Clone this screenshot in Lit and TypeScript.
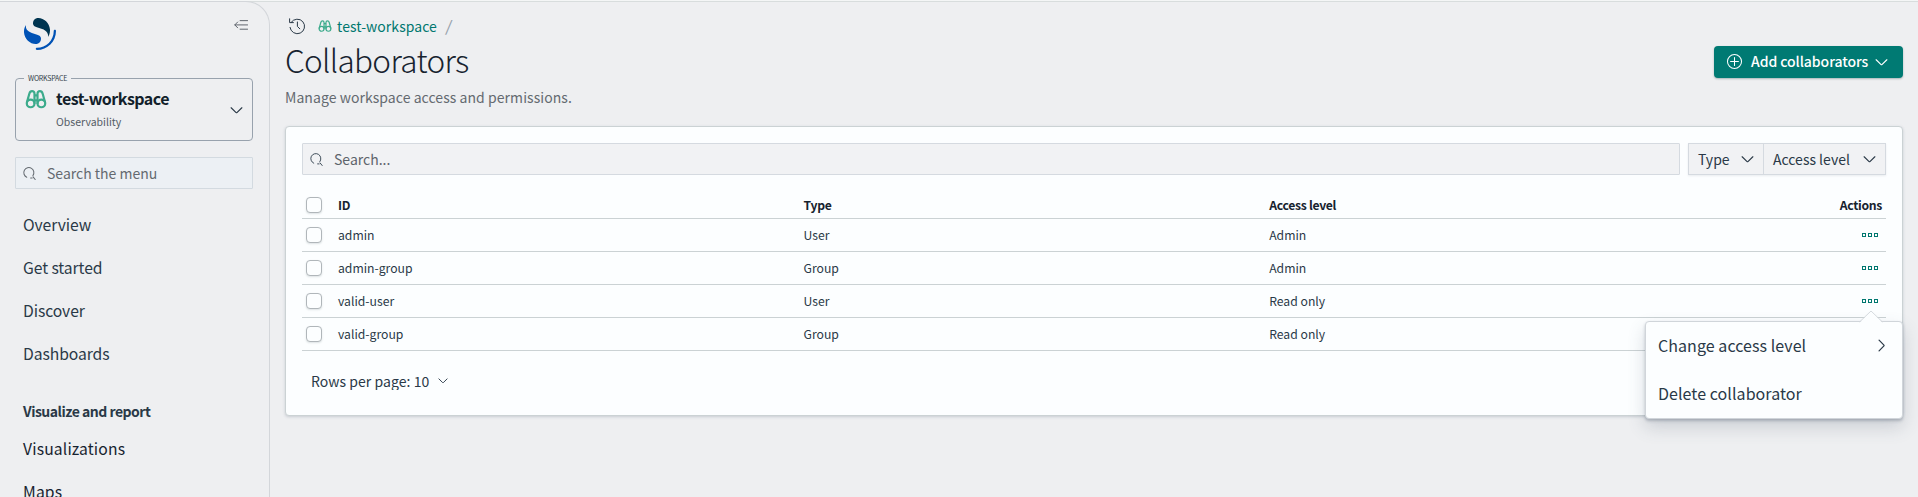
import { LitElement, html, css, svg } from "lit";
import { customElement, property } from "lit/decorators.js";

const glyphs: Record<string, unknown> = {
  search: svg`<path d="M4.6 12.6A6.2 6.2 0 1 1 12.2 10.6M9.4 13.4h1.8M12.4 12.2L15 15.4" />`,
  chevron: svg`<path d="M1.4 4.6L7.5 10.6a.7.7 0 0 0 1 0L14.6 4.6" />`,
  chevronRight: svg`<path d="M5 1.4L11 7.5a.7.7 0 0 1 0 1L5 14.6" />`,
  plus: svg`<circle cx="8" cy="8" r="7.5" /><path d="M8 3.8v8.4M3.8 8h8.4" />`,
  collapse: svg`<path d="M7 3h8.5M1 7.9h14.5M7 12.8h8.5M4.2 4.6L.9 7.9l3.3 3.3" />`,
  history: svg`<path d="M2.2 4.3A7.3 7.3 0 1 1 1 9.4M.6.8v3.8h3.8M8.4 4v4.4l2.4 2.4" />`,
  glasses: svg`<circle cx="4.1" cy="11.2" r="2.8" /><circle cx="11.9" cy="11.2" r="2.8" /><path d="M1.4 10.4L3.2 4Q3.7 2.2 5.1 2.2Q6.8 2.2 6.9 4V11M14.6 10.4L12.8 4Q12.3 2.2 10.9 2.2Q9.2 2.2 9.1 4V11M6.9 5.4h2.2M6.9 9h2.2" />`,
  dots: svg`<path class="sharp" d="M.5 6.5h3v3h-3zM6.5 6.5h3v3h-3zM12.5 6.5h3v3h-3z" />`,
};

@customElement("ui-icon")
class UiIcon extends LitElement {
  @property() name = "search";
  static styles = css`
    :host { display: block; flex: none; width: 16px; height: 16px; }
    svg { display: block; width: 100%; height: 100%; overflow: visible; fill: none; stroke: currentColor; stroke-width: var(--stroke, 1.25); stroke-linecap: round; stroke-linejoin: round; }
    .sharp { stroke-linejoin: miter; shape-rendering: crispEdges; }
  `;
  render() {
    return html`<svg viewBox="0 0 16 16">${glyphs[this.name]}</svg>`;
  }
}

@customElement("side-nav")
class SideNav extends LitElement {
  static styles = css`
    :host { display: block; box-sizing: border-box; width: 270px; flex: none; height: 496px; overflow: hidden; border: 1px solid #d3d6da; border-width: 1px 1px 0 0; border-top-right-radius: 24px; padding: 16px 16px 0 15px; }
    .top { display: flex; justify-content: space-between; align-items: flex-start; padding: 0 5px 0 9px; }
    .logo { display: block; width: 32px; height: 32px; }
    .toggle { width: 14px; height: 14px; color: #5a6068; --stroke: 1.1; }
    .space { box-sizing: border-box; height: 69px; margin: 22px 0 0; padding: 0 9px 0 8px; min-width: 0; border: 1px solid #98a2ad; border-radius: 4px; }
    legend { padding: 0 4px; font-size: 7px; line-height: 12px; letter-spacing: -0.22px; color: #343f4a; }
    .row { display: flex; }
    .binoc { width: 22px; height: 22px; color: #3cab8c; --stroke: 1.6; margin: 4px 9px 0 1px; }
    .who { flex: 1; }
    .name { font-size: 16px; font-weight: 700; line-height: 24px; letter-spacing: -0.53px; color: #131f2b; margin-top: 2px; }
    .kind { font-size: 10.5px; line-height: 18px; color: #555d66; margin-top: 3px; }
    .chev { width: 13px; height: 13px; margin-top: 20px; color: #2a3947; --stroke: 1.4; }
    .find { box-sizing: border-box; display: flex; align-items: center; height: 32px; margin-top: 16px; padding: 0 7px; border: 1px solid #d3dae0; background: #ecf0f4; font-size: 14px; color: #646a70; border-radius: 1px; }
    .find ui-icon { width: 13px; height: 13px; margin-right: 11px; }
    ul { list-style: none; margin: 14px 0 0; padding: 0 0 0 8px; }
    li { height: 43px; line-height: 43px; font-size: 15.7px; letter-spacing: -0.08px; color: #2a3947; }
    .head { height: 29px; line-height: 27px; padding-top: 23px; font-size: 14px; font-weight: 700; letter-spacing: -0.5px; }
    .dark { color: #17232f; letter-spacing: 0.15px; }
  `;
  render() {
    return html`
      <div class="top">
        <svg class="logo" viewBox="0 0 64 64">
          <path fill="#0052b5" d="M61.7374 23.5C60.4878 23.5 59.4748 24.513 59.4748 25.7626C59.4748 44.3813 44.3813 59.4748 25.7626 59.4748C24.513 59.4748 23.5 60.4878 23.5 61.7374C23.5 62.987 24.513 64 25.7626 64C46.8805 64 64 46.8805 64 25.7626C64 24.513 62.987 23.5 61.7374 23.5Z" />
          <path fill="#003551" d="M48.0814 38C50.2572 34.4505 52.3615 29.7178 51.9475 23.0921C51.0899 9.36725 38.6589 -1.04463 26.9206 0.0837327C22.3253 0.525465 17.6068 4.2712 18.026 10.9805C18.2082 13.8961 19.6352 15.6169 21.9544 16.9399C24.1618 18.1992 26.9978 18.9969 30.2128 19.9011C34.0962 20.9934 38.6009 22.2203 42.063 24.7717C46.2125 27.8295 49.0491 31.3743 48.0814 38Z" />
          <path fill="#0052b5" d="M3.91861 14C1.74276 17.5495 -0.361506 22.2822 0.0524931 28.9079C0.910072 42.6327 13.3411 53.0446 25.0794 51.9163C29.6747 51.4745 34.3932 47.7288 33.974 41.0195C33.7918 38.1039 32.3647 36.3831 30.0456 35.0601C27.8382 33.8008 25.0022 33.0031 21.7872 32.0989C17.9038 31.0066 13.3991 29.7797 9.93694 27.2283C5.78746 24.1704 2.95092 20.6257 3.91861 14Z" />
        </svg>
        <ui-icon class="toggle" name="collapse"></ui-icon>
      </div>
      <fieldset class="space">
        <legend>WORKSPACE</legend>
        <div class="row">
          <ui-icon class="binoc" name="glasses"></ui-icon>
          <div class="who"><div class="name">test-workspace</div><div class="kind">Observability</div></div>
          <ui-icon class="chev" name="chevron"></ui-icon>
        </div>
      </fieldset>
      <div class="find"><ui-icon name="search"></ui-icon>Search the menu</div>
      <ul>
        ${["Overview", "Get started", "Discover", "Dashboards"].map((t) => html`<li>${t}</li>`)}
        <li class="head">Visualize and report</li>
        ${["Visualizations", "Maps"].map((t) => html`<li class="dark">${t}</li>`)}
      </ul>
    `;
  }
}

const people = [
  { id: "admin", type: "User", access: "Admin" },
  { id: "admin-group", type: "Group", access: "Admin" },
  { id: "valid-user", type: "User", access: "Read only" },
  { id: "valid-group", type: "Group", access: "Read only", last: true },
];

@customElement("collab-table")
class CollabTable extends LitElement {
  static styles = css`
    :host { display: block; }
    .tr { display: grid; grid-template-columns: 28px 465.6px 465.6px 465.6px 1fr; align-items: center; height: 32px; border-bottom: 1px solid #cbd2d4; font-size: 12.2px; line-height: 18px; color: #2a3947; }
    .th { height: 27px; font-weight: 700; letter-spacing: -0.3px; color: #17232f; }
    .cell { padding: 0 8px; }
    .check { width: 14px; height: 14px; margin-left: 4px; border: 1px solid #b0b6ba; border-radius: 4px; background: #fcfeff; box-shadow: 0 1px 2px rgba(60, 80, 90, 0.16); }
    .act { padding-right: 4px; text-align: right; }
    .more { width: 16px; height: 16px; color: #00776f; --stroke: 1; margin-left: auto; margin-right: 8px; }
    .anchor { position: relative; }
    .menu { position: absolute; z-index: 2; right: -17px; top: 28px; box-sizing: border-box; width: 258px; height: 98px; padding: 0 15px 0 12px; background: #fcfeff; border: 1px solid #d0d5da; border-radius: 4px; box-shadow: 0 2px 3px rgba(65, 78, 101, 0.3), 0 8px 18px rgba(65, 78, 101, 0.2); }
    .tip { position: absolute; right: 19px; top: -12px; width: 24px; height: 13px; }
    .item { display: flex; justify-content: space-between; align-items: center; box-sizing: border-box; height: 48px; padding-bottom: 3px; font-size: 16px; letter-spacing: 0.06px; color: #2a3947; }
    .item ui-icon { width: 13px; height: 13px; --stroke: 1.5; margin: 1px -1px 0 0; }
  `;
  render() {
    return html`
      <div class="tr th">
        <div class="check"></div><div class="cell">ID</div><div class="cell">Type</div><div class="cell">Access level</div><div class="act">Actions</div>
      </div>
      ${people.map(
        (p, i) => html`<div class="tr">
          <div class="check"></div><div class="cell">${p.id}</div><div class="cell">${p.type}</div><div class="cell">${p.access}</div>
          <div class="anchor">${p.last ? "" : html`<ui-icon class="more" name="dots"></ui-icon>`}${i === 2 ? this.menu() : ""}</div>
        </div>`,
      )}
    `;
  }
  menu() {
    return html`<div class="menu">
      <svg class="tip" viewBox="0 0 24 13"><path d="M0.5 13L12 1L23.5 13Z" fill="#fcfeff" /><path d="M0.5 12L12 1L23.5 12" fill="none" stroke="#d5dade" /></svg>
      <div class="item">Change access level<ui-icon name="chevronRight"></ui-icon></div>
      <div class="item">Delete collaborator</div>
    </div>`;
  }
}

@customElement("app-root")
class AppRoot extends LitElement {
  static styles = css`
    :host { display: block; box-sizing: border-box; height: 497px; overflow: hidden; background: #eeeff1; border-top: 1px solid #f4f6f6; font-family: "Noto Sans CJK SC", "Noto Sans", sans-serif; color: #2a3947; }
    .page { display: flex; height: 496px; border-top: 1px solid #d8dddd; box-sizing: border-box; }
    side-nav { margin-top: -1px; }
    main { flex: 1; padding: 0 15px; min-width: 0; }
    .crumbs { display: flex; align-items: center; height: 24px; margin-top: 12px; padding-left: 4px; font-size: 14px; line-height: 24px; letter-spacing: 0.06px; color: #00776f; }
    .crumbs .hist { color: #2a3947; --stroke: 1; margin-right: 13px; }
    .crumbs .ws { color: #3cab8c; width: 14px; height: 14px; --stroke: 1.4; margin-right: 5px; }
    .slash { color: #98a2ad; margin-left: 9px; font-size: 15px; font-weight: 500; transform: skewX(-8deg); }
    .title { display: flex; justify-content: space-between; height: 44px; }
    h1 { margin: -1px 0 0; font-weight: 300; font-size: 31.5px; line-height: 44px; letter-spacing: -0.68px; color: #17232f; }
    .add { display: flex; align-items: center; box-sizing: border-box; width: 189px; height: 32px; margin-top: 8px; padding: 0 15px 0 13px; background: #007a73; color: #fff; border-radius: 4px; font-size: 14px; font-weight: 500; letter-spacing: -0.06px; box-shadow: 0 1px 2px rgba(0, 50, 50, 0.3); }
    .add span { padding-bottom: 2px; }
    .add .lead { width: 15px; height: 15px; --stroke: 1.1; margin: 0 9px 1px 0; }
    .add .tail { width: 13px; height: 13px; margin-left: auto; margin-top: 1px; --stroke: 1.4; }
    .desc { margin-top: 3px; font-size: 14px; line-height: 24px; letter-spacing: 0.06px; color: #646a70; }
    .panel { box-sizing: border-box; height: 290px; margin-top: 17px; padding: 16px; background: #fcfeff; border: 1px solid #cbd2d4; border-radius: 4px; box-shadow: 0 1px 3px rgba(65, 78, 101, 0.22); }
    .bar { display: flex; gap: 8px; }
    .search { flex: 1; display: flex; align-items: center; box-sizing: border-box; height: 32px; padding: 0 7px; border: 1px solid #d5dae0; background: #f1f2f4; font-size: 14px; color: #5d646b; border-radius: 1px; }
    .search ui-icon { width: 13px; height: 13px; margin-right: 11px; color: #2a3947; --stroke: 1.1; }
    .filters { display: flex; box-sizing: border-box; height: 32px; border: 1px solid #d5dae0; background: #f1f2f4; font-size: 14px; box-shadow: 0 1px 2px rgba(65, 78, 101, 0.1); }
    .f { display: flex; align-items: center; justify-content: space-between; box-sizing: border-box; padding: 0 9px; width: 74px; }
    .f + .f { border-left: 1px solid #d5dae0; width: 122px; }
    .f span { padding-bottom: 1px; }
    .f ui-icon { width: 13px; height: 13px; --stroke: 1.4; }
    collab-table { margin-top: 16px; }
    .pages { display: flex; align-items: center; height: 18px; overflow: hidden; margin-top: 21px; padding-left: 9px; font-size: 14px; line-height: 22px; letter-spacing: 0.05px; }
    .pages ui-icon { width: 10px; height: 10px; margin-left: 9px; --stroke: 1.5; }
  `;
  render() {
    return html`<div class="page">
      <side-nav></side-nav>
      <main>
        <div class="crumbs">
          <ui-icon class="hist" name="history"></ui-icon><ui-icon class="ws" name="glasses"></ui-icon><span>test-workspace</span><span class="slash">/</span>
        </div>
        <div class="title">
          <h1>Collaborators</h1>
          <div class="add"><ui-icon class="lead" name="plus"></ui-icon><span>Add collaborators</span><ui-icon class="tail" name="chevron"></ui-icon></div>
        </div>
        <div class="desc">Manage workspace access and permissions.</div>
        <section class="panel">
          <div class="bar">
            <div class="search"><ui-icon name="search"></ui-icon>Search...</div>
            <div class="filters">
              <div class="f"><span>Type</span><ui-icon name="chevron"></ui-icon></div>
              <div class="f"><span>Access level</span><ui-icon name="chevron"></ui-icon></div>
            </div>
          </div>
          <collab-table></collab-table>
          <div class="pages"><span>Rows per page: 10</span><ui-icon name="chevron"></ui-icon></div>
        </section>
      </main>
    </div>`;
  }
}
